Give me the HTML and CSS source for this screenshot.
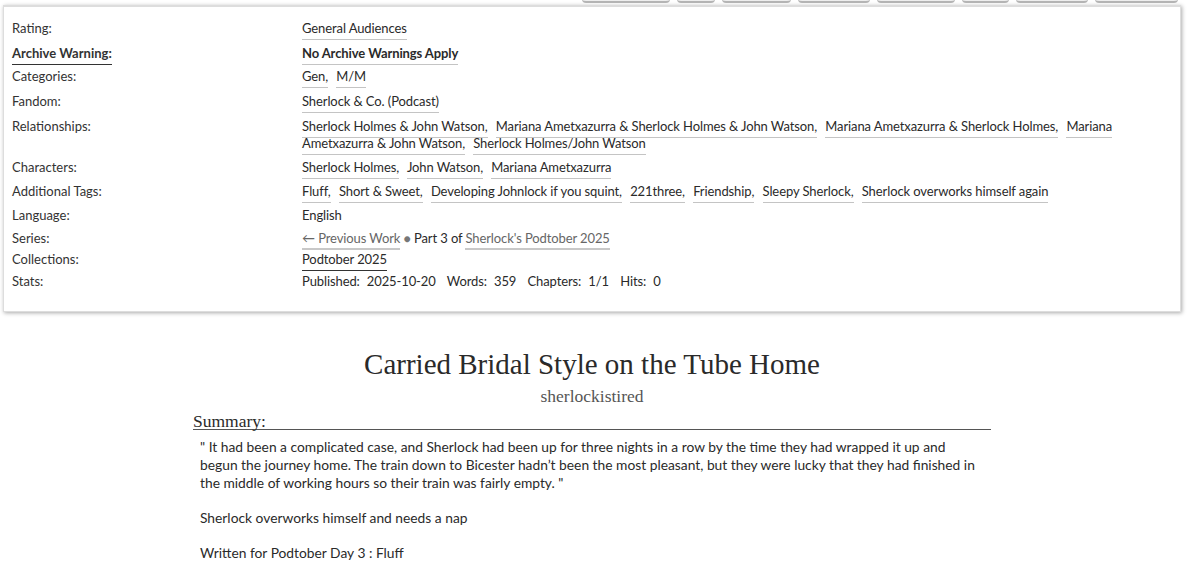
FILE: index.html
```html
<!DOCTYPE html>
<html lang="en">
<head>
    <meta charset="UTF-8">
    <title>Carried Bridal Style on the Tube Home - sherlockistired</title>
    <link rel="stylesheet" href="styles.css">
</head>
<body>
    <div class="page">
        <ul class="actions">
            <li style="width: 88px"></li>
            <li style="width: 38px"></li>
            <li style="width: 69px"></li>
            <li style="width: 72px"></li>
            <li style="width: 78px"></li>
            <li style="width: 47px"></li>
            <li style="width: 72px"></li>
            <li style="width: 83px"></li>
        </ul>

        <div class="wrapper">
            <dl class="work-meta">
                <dt class="rating">Rating:</dt>
                <dd class="rating"><a class="tag">General Audiences</a></dd>

                <dt class="warning"><span class="warn-label">Archive Warning:</span></dt>
                <dd class="warning"><a class="tag bold">No Archive Warnings Apply</a></dd>

                <dt class="category">Categories:</dt>
                <dd class="category"><a class="tag">Gen,</a> <a class="tag">M/M</a></dd>

                <dt class="fandom">Fandom:</dt>
                <dd class="fandom"><a class="tag">Sherlock &amp; Co. (Podcast)</a></dd>

                <dt>Relationships:</dt>
                <dd><a class="tag">Sherlock Holmes &amp; John Watson,</a> <a class="tag">Mariana Ametxazurra &amp; Sherlock Holmes &amp; John Watson,</a> <a class="tag">Mariana Ametxazurra &amp; Sherlock Holmes,</a> <a class="tag">Mariana Ametxazurra &amp; John Watson,</a> <a class="tag">Sherlock Holmes/John Watson</a></dd>

                <dt>Characters:</dt>
                <dd><a class="tag">Sherlock Holmes,</a> <a class="tag">John Watson,</a> <a class="tag">Mariana Ametxazurra</a></dd>

                <dt>Additional Tags:</dt>
                <dd><a class="tag">Fluff,</a> <a class="tag">Short &amp; Sweet,</a> <a class="tag">Developing Johnlock if you squint,</a> <a class="tag">221three,</a> <a class="tag">Friendship,</a> <a class="tag">Sleepy Sherlock,</a> <a class="tag">Sherlock overworks himself again</a></dd>

                <dt class="language">Language:</dt>
                <dd class="language">English</dd>

                <dt class="series">Series:</dt>
                <dd class="series"><a class="series-link">&larr; Previous Work</a> <span class="divider">&#9679;</span> Part 3 of <a class="series-link">Sherlock's Podtober 2025</a></dd>

                <dt class="collections">Collections:</dt>
                <dd class="collections"><a class="tag dark">Podtober 2025</a></dd>

                <dt>Stats:</dt>
                <dd class="stats">
                    <span class="stat">Published:</span><span class="val">2025-10-20</span>
                    <span class="stat">Words:</span><span class="val">359</span>
                    <span class="stat">Chapters:</span><span class="val">1/1</span>
                    <span class="stat">Hits:</span><span class="val">0</span>
                </dd>
            </dl>
        </div>

        <div class="preface">
            <h2 class="title">Carried Bridal Style on the Tube Home</h2>
            <h3 class="byline">sherlockistired</h3>

            <div class="summary">
                <h3 class="heading">Summary:</h3>
                <blockquote class="userstuff">
                    <p>" It had been a complicated case, and Sherlock had been up for three nights in a row by the time they had wrapped it up and begun the journey home. The train down to Bicester hadn’t been the most pleasant, but they were lucky that they had finished in the middle of working hours so their train was fairly empty. "</p>
                    <p>Sherlock overworks himself and needs a nap</p>
                    <p>Written for Podtober Day 3 : Fluff</p>
                </blockquote>
            </div>
        </div>
    </div>
</body>
</html>
```

FILE: styles.css
```css
body {
    margin: 0;
    background: #fff;
    color: #2a2a2a;
    font-family: Lato, "Liberation Sans", sans-serif;
    font-size: 13px;
}
.page {
    width: 1184px;
}

/* cut-off action buttons above the meta box */
.actions {
    list-style: none;
    margin: 0;
    padding: 0 6px 0 0;
    height: 3px;
    overflow: hidden;
    display: flex;
    justify-content: flex-end;
    align-items: flex-end;
    gap: 7px;
}
.actions li {
    height: 20px;
    background: #eee;
    border-bottom: 2px solid #b4b4b4;
    border-radius: 0 0 4px 4px;
}

.wrapper {
    margin: 2px 3px 0 3px;
    border: 1px solid #ddd;
    border-top-width: 2px;
    box-shadow: 1px 1px 4px #aaa;
    padding: 13px 8px 14px 8px;
}
.work-meta {
    display: grid;
    grid-template-columns: 290px 1fr;
    margin: 0;
    line-height: 17px;
}
.work-meta dt,
.work-meta dd {
    margin: 0 0 7px 0;
}
.work-meta dt {
    color: #333;
}
.work-meta dd {
    padding-right: 50px;
    letter-spacing: -0.1px;
}
.work-meta .rating,
.work-meta .category,
.work-meta .fandom {
    margin-bottom: 8px;
}
.work-meta .warning,
.work-meta .language {
    margin-bottom: 6px;
}
.work-meta .series {
    margin-bottom: 4px;
}
.work-meta .collections {
    margin-bottom: 5px;
}

.warn-label {
    font-weight: bold;
    border-bottom: 1px solid #333;
    padding-bottom: 3px;
}
.tag {
    border-bottom: 1px solid #c4c4c4;
    padding-bottom: 3px;
    margin-right: 5px;
}
.tag.bold {
    font-weight: bold;
}
.tag.dark {
    border-bottom-color: #333;
}
.series-link {
    color: #666;
    border-bottom: 2px solid #c8c8c8;
    padding-bottom: 2px;
}
.divider {
    color: #777;
    font-size: 12px;
}
.stats .val {
    margin: 0 8px 0 7px;
}

.preface {
    padding: 0 193px;
}
.title {
    font-family: "Liberation Serif", serif;
    font-weight: normal;
    font-size: 29px;
    line-height: 34px;
    text-align: center;
    margin: 35px 0 0 0;
}
.byline {
    font-family: "Liberation Serif", serif;
    font-weight: normal;
    font-size: 17.5px;
    line-height: 20px;
    color: #555;
    text-align: center;
    margin: 5px 0 0 0;
}
.summary .heading {
    font-family: "Liberation Serif", serif;
    font-weight: normal;
    font-size: 17.5px;
    line-height: 16px;
    margin: 7px 0 0 0;
    border-bottom: 1px solid #555;
}
.userstuff {
    margin: 8px 12px 0 7px;
    font-size: 13.8px;
    line-height: 18px;
}
.userstuff p {
    margin: 0 0 17px 0;
}
```
